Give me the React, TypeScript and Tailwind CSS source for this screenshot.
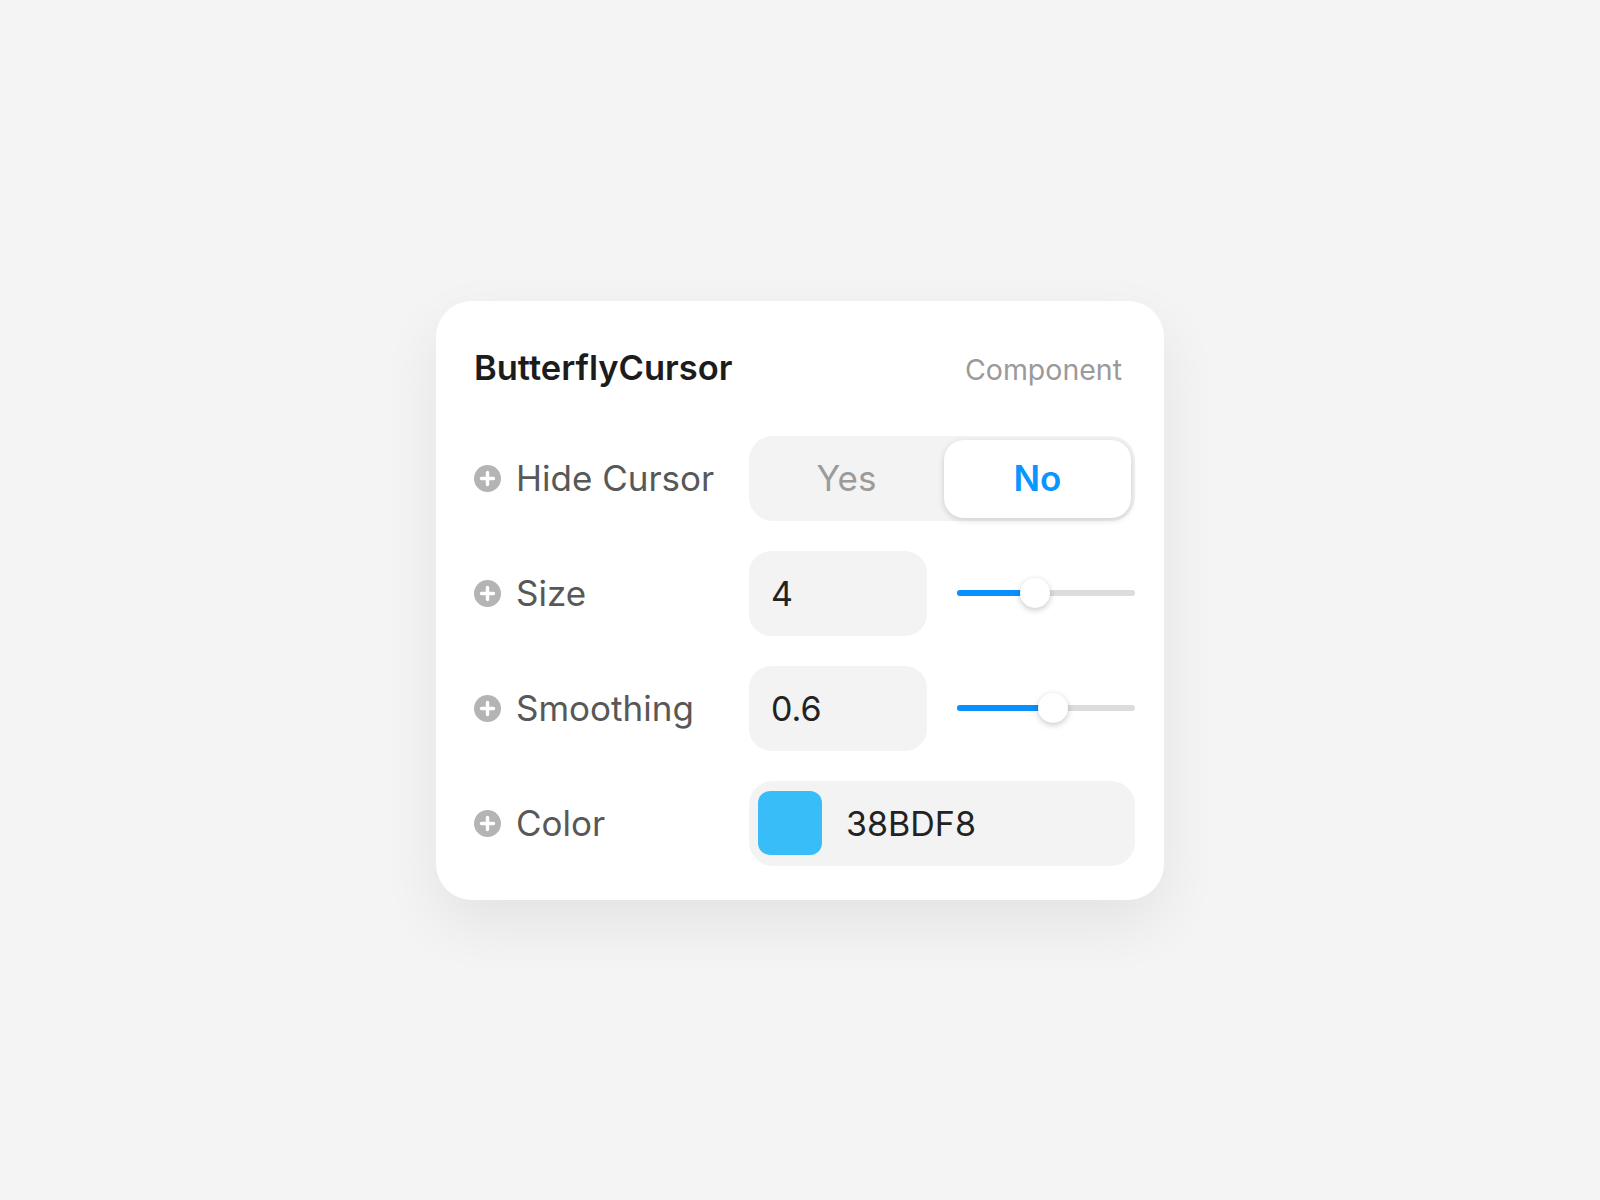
import React from 'react';

const font = { fontFamily: 'Inter, "Noto Sans", "Liberation Sans", sans-serif' };

function PlusCircle() {
  return (
    <svg width="27" height="27" viewBox="0 0 27 27" className="shrink-0">
      <circle cx="13.5" cy="13.5" r="13.5" fill="#b4b4b4" />
      <path d="M13.5 7.5v12M7.5 13.5h12" stroke="#fff" strokeWidth="3.4" strokeLinecap="round" />
    </svg>
  );
}

function Label({ text }: { text: string }) {
  return (
    <div className="flex items-center gap-[15px] w-[275px] shrink-0 text-[35px] text-[#585858]">
      <PlusCircle />
      <span>{text}</span>
    </div>
  );
}

function Slider({ value }: { value: number }) {
  return (
    <div className="relative flex-1 h-[30px] flex items-center">
      <div className="w-full h-[6px] rounded-full bg-[#dcdcdc]" />
      <div className="absolute left-0 h-[6px] rounded-full bg-[#0a8fff]" style={{ width: `${value * 100}%` }} />
      <div
        className="absolute w-[30px] h-[30px] rounded-full bg-white shadow-[0_2px_6px_rgba(0,0,0,0.22)]"
        style={{ left: `calc(${value * 100}% - 15px)` }}
      />
    </div>
  );
}

function NumberRow({ label, value, pos }: { label: string; value: string; pos: number }) {
  return (
    <div className="flex items-center h-[85px]">
      <Label text={label} />
      <div className="flex items-center gap-[30px] w-[386px]">
        <div className="w-[178px] h-[85px] rounded-[22px] bg-[#f3f3f3] flex items-center pl-[22px] text-[34px] text-[#222]">
          {value}
        </div>
        <Slider value={pos} />
      </div>
    </div>
  );
}

export default function App() {
  return (
    <div className="min-h-[1200px] w-full bg-[#f4f4f4] flex items-center justify-center" style={font}>
      <div className="w-[728px] bg-white rounded-[36px] pl-[38px] pr-[29px] pt-[45px] pb-[34px] shadow-[0_24px_60px_rgba(0,0,0,0.07)]">
        {/* Cabeçalho */}
        <div className="flex items-baseline justify-between h-[44px] pr-[13px]">
          <h1 className="text-[34.5px] font-semibold text-[#1c1c1c] leading-[44px]">ButterflyCursor</h1>
          <span className="text-[28.5px] text-[#9a9a9a]">Component</span>
        </div>

        <div className="mt-[46px] flex flex-col gap-[30px]">
          {/* Hide Cursor */}
          <div className="flex items-center h-[85px]">
            <Label text="Hide Cursor" />
            <div className="w-[386px] h-[85px] rounded-[24px] bg-[#f3f3f3] p-[4px] pb-[3px] flex">
              <div className="flex-1 flex items-center justify-center pr-[4px] text-[35px] text-[#9b9b9b]">Yes</div>
              <div className="w-[187px] flex items-center justify-center rounded-[20px] bg-white shadow-[0_2px_6px_rgba(0,0,0,0.16)] text-[35px] font-semibold text-[#0a95ff]">
                No
              </div>
            </div>
          </div>

          <NumberRow label="Size" value="4" pos={0.44} />
          <NumberRow label="Smoothing" value="0.6" pos={0.54} />

          {/* Color */}
          <div className="flex items-center h-[85px]">
            <Label text="Color" />
            <div className="w-[386px] h-[85px] rounded-[24px] bg-[#f3f3f3] flex items-center pl-[9px] gap-[24px]">
              <div className="w-[64px] h-[64px] rounded-[12px] bg-[#38bdf8]" />
              <span className="text-[34px] text-[#222]">38BDF8</span>
            </div>
          </div>
        </div>
      </div>
    </div>
  );
}
